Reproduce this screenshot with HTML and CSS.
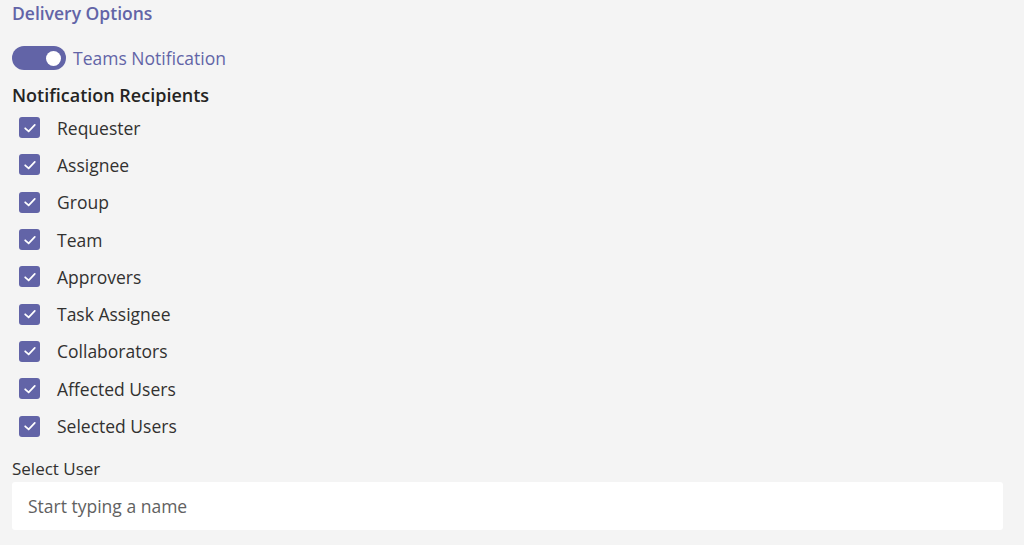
FILE: index.html
```html
<!DOCTYPE html>
<html lang="en">

<head>
    <meta charset="UTF-8">
    <meta name="viewport" content="width=device-width, initial-scale=1.0">
    <title>Delivery Options</title>
    <link rel="stylesheet" href="styles.css">
</head>

<body>
    <div class="panel">
        <h2 class="section-title">Delivery Options</h2>

        <label class="toggle-row">
            <span class="toggle"><span class="knob"></span></span>
            <span class="toggle-label">Teams Notification</span>
        </label>

        <h3 class="group-title">Notification Recipients</h3>
        <ul class="recipients">
            <li><span class="check"><svg viewBox="0 0 12 12"><path d="M2.4 6.2 L5 8.6 L9.6 3.7"/></svg></span>Requester</li>
            <li><span class="check"><svg viewBox="0 0 12 12"><path d="M2.4 6.2 L5 8.6 L9.6 3.7"/></svg></span>Assignee</li>
            <li><span class="check"><svg viewBox="0 0 12 12"><path d="M2.4 6.2 L5 8.6 L9.6 3.7"/></svg></span>Group</li>
            <li><span class="check"><svg viewBox="0 0 12 12"><path d="M2.4 6.2 L5 8.6 L9.6 3.7"/></svg></span>Team</li>
            <li><span class="check"><svg viewBox="0 0 12 12"><path d="M2.4 6.2 L5 8.6 L9.6 3.7"/></svg></span>Approvers</li>
            <li><span class="check"><svg viewBox="0 0 12 12"><path d="M2.4 6.2 L5 8.6 L9.6 3.7"/></svg></span>Task Assignee</li>
            <li><span class="check"><svg viewBox="0 0 12 12"><path d="M2.4 6.2 L5 8.6 L9.6 3.7"/></svg></span>Collaborators</li>
            <li><span class="check"><svg viewBox="0 0 12 12"><path d="M2.4 6.2 L5 8.6 L9.6 3.7"/></svg></span>Affected Users</li>
            <li><span class="check"><svg viewBox="0 0 12 12"><path d="M2.4 6.2 L5 8.6 L9.6 3.7"/></svg></span>Selected Users</li>
        </ul>

        <label class="field-label" for="userSearch">Select User</label>
        <input id="userSearch" class="user-input" type="text" placeholder="Start typing a name">
    </div>
</body>

</html>
```

FILE: styles.css
```css
body {
    margin: 0;
    background-color: #f4f4f4;
    font-family: "Open Sans", "Noto Sans", sans-serif;
    color: #323130;
}

.panel {
    display: flex;
    flex-direction: column;
    padding: 0 21px 0 12px;
}

.section-title {
    margin: 0;
    height: 26px;
    line-height: 26px;
    font-size: 17.5px;
    font-weight: 600;
    color: #6264a7;
}

.toggle-row {
    display: flex;
    align-items: center;
    gap: 7px;
    margin-top: 19px;
    height: 26px;
}

.toggle {
    display: flex;
    align-items: center;
    justify-content: flex-end;
    width: 54px;
    height: 24px;
    padding: 0 5px;
    box-sizing: border-box;
    border-radius: 12px;
    background-color: #6264a7;
}

.knob {
    width: 15px;
    height: 15px;
    border-radius: 50%;
    background-color: #fff;
}

.toggle-label {
    font-size: 17.5px;
    color: #6264a7;
}

.group-title {
    margin: 11px 0 0;
    height: 26px;
    line-height: 26px;
    font-size: 18px;
    font-weight: 600;
    color: #252423;
}

.recipients {
    list-style: none;
    margin: 1px 0 0;
    padding: 0;
}

.recipients li {
    display: flex;
    align-items: center;
    height: 37.3px;
    padding-left: 7px;
    font-size: 17.5px;
}

.check {
    display: flex;
    align-items: center;
    justify-content: center;
    width: 21px;
    height: 21px;
    margin-right: 17px;
    border-radius: 3px;
    background-color: #6264a7;
}

.check svg {
    width: 16px;
    height: 16px;
    fill: none;
    stroke: #fff;
    stroke-width: 1.3;
    stroke-linecap: round;
    stroke-linejoin: round;
}

.field-label {
    margin-top: 12px;
    height: 24px;
    line-height: 24px;
    font-size: 17px;
}

.user-input {
    margin-top: 1px;
    height: 48px;
    padding: 0 16px;
    border: none;
    border-radius: 3px;
    background-color: #fff;
    font-family: inherit;
    font-size: 17.5px;
    color: #323130;
    outline: none;
}

.user-input::placeholder {
    color: #616161;
}
```
